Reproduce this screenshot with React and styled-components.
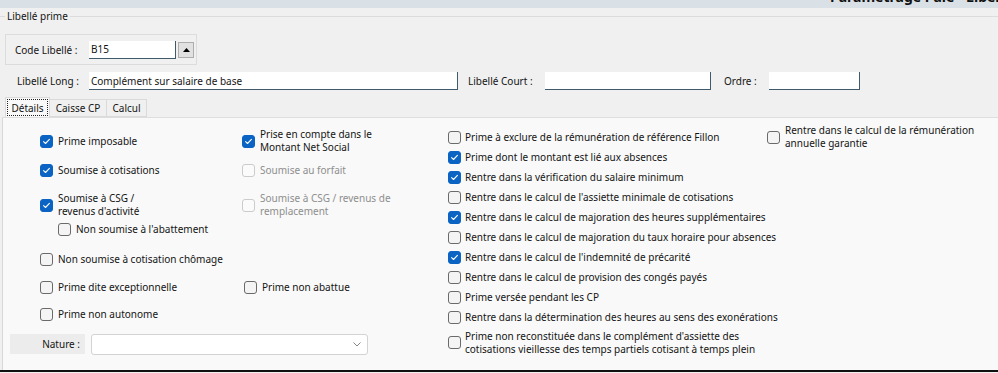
import React from "react";
import styled, { createGlobalStyle } from "styled-components";

const Global = createGlobalStyle`
  html, body { margin: 0; padding: 0; background: #f0f0f0; }
  body { font-family: "Noto Sans", "Open Sans", sans-serif; font-size: 10px; color: #141414; }
  * { box-sizing: border-box; }
`;

const Window = styled.div`
  width: 998px;
  height: 373px;
  overflow: hidden;
  display: flex;
  flex-direction: column;
  background: #f0f0f0;
`;

const TitleBar = styled.div`
  height: 8px;
  flex: none;
  background: #d9e1e7;
  overflow: hidden;
`;

const TitleText = styled.div`
  margin: -10px 0 0 830px;
  font-size: 14px;
  line-height: 14px;
  font-weight: 700;
  white-space: nowrap;
  color: #111;
`;

const Header = styled.div`
  flex: none;
  padding-top: 3px;
  background: #f0f0f0;
`;

const LegendRow = styled.div`
  display: flex;
  align-items: center;
  height: 11px;
  gap: 2px;
`;

const LegendLine = styled.div`
  height: 1px;
  background: #dcdcdc;
  width: ${(p) => (p.$w ? `${p.$w}px` : "auto")};
  flex: ${(p) => (p.$w ? "none" : "1")};
`;

const LegendText = styled.span`
  white-space: nowrap;
  line-height: 11px;
`;

const CodeBox = styled.div`
  margin: 12px 0 0 5px;
  width: 192px;
  height: 31px;
  border: 1px solid #dcdcdc;
  display: flex;
  align-items: center;
  padding-left: 9px;
`;

const Label = styled.span`
  flex: none;
  width: ${(p) => p.$w}px;
  margin-left: ${(p) => p.$ml || 0}px;
  white-space: nowrap;
`;

const TextInput = styled.div`
  flex: none;
  width: ${(p) => p.$w}px;
  height: 18px;
  background: #fff;
  border-right: 1px solid #3f5a6a;
  border-bottom: 1px solid #3f5a6a;
  padding-left: 2px;
  display: flex;
  align-items: center;
  white-space: nowrap;
`;

const SpinButton = styled.div`
  flex: none;
  margin-left: 2px;
  width: 16px;
  height: 16px;
  background: #e1e1e1;
  border: 1px solid #adadad;
  display: flex;
  align-items: center;
  justify-content: center;
`;

const FieldsRow = styled.div`
  margin-top: 7px;
  height: 18px;
  display: flex;
  align-items: center;
  padding-left: 17px;
`;

const TabStrip = styled.div`
  margin-top: 7px;
  height: 20px;
  display: flex;
  align-items: flex-end;
  padding-left: 5px;
`;

const Tab = styled.div`
  height: ${(p) => (p.$active ? 20 : 18)}px;
  width: ${(p) => p.$w}px;
  background: ${(p) => (p.$active ? "#f9f9f9" : "#f0f0f0")};
  border: 1px solid #dadada;
  border-bottom: ${(p) => (p.$active ? "none" : "1px solid #dadada")};
  margin-left: ${(p) => (p.$active ? 0 : -1)}px;
  display: flex;
  align-items: center;
  justify-content: center;
  white-space: nowrap;
  padding: 1px;
`;

const FocusRect = styled.div`
  width: 100%;
  height: 100%;
  border: 1px dotted #222;
  display: flex;
  align-items: center;
  justify-content: center;
`;

const Panel = styled.div`
  flex: none;
  height: 253px;
  margin-left: 2px;
  background: #f9f9f9;
  border-top: 1px solid #dedede;
  border-left: 1px solid #d8d8d8;
  display: flex;
`;

const BottomLine = styled.div`
  flex: none;
  height: 2px;
  background: #111;
`;

const LeftArea = styled.div`
  flex: none;
  width: 445px;
  padding: 12px 0 0 7px;
  display: flex;
  flex-direction: column;
`;

const Row = styled.div`
  display: flex;
  align-items: center;
  height: ${(p) => p.$h || 22}px;
  margin-top: ${(p) => p.$mt || 0}px;
  padding-left: ${(p) => (p.$pl !== undefined ? p.$pl : 30)}px;
`;

const Cell = styled.div`
  flex: none;
  width: ${(p) => (p.$w ? `${p.$w}px` : "auto")};
  display: flex;
  align-items: center;
`;

const Item = styled.label`
  display: flex;
  align-items: center;
  gap: ${(p) => p.$gap || 5}px;
  height: ${(p) => (p.$h ? `${p.$h}px` : "auto")};
  color: ${(p) => (p.$disabled ? "#8e8e8e" : "#141414")};
  line-height: 13px;
`;

const Box = styled.span`
  flex: none;
  width: 13px;
  height: 13px;
  border-radius: 3px;
  display: flex;
  align-items: center;
  justify-content: center;
  background: ${(p) => (p.$checked ? "#0b63c4" : p.$disabled ? "#fbfbfb" : "#f4f4f4")};
  border: 1px solid
    ${(p) => (p.$checked ? "#0b63c4" : p.$disabled ? "#cbcbcb" : "#6a6a6a")};
`;

const ItemText = styled.span`
  white-space: nowrap;
`;

const RightList = styled.div`
  flex: none;
  width: 319px;
  padding-top: 9px;
  display: flex;
  flex-direction: column;
`;

const FarRight = styled.div`
  flex: none;
  padding-top: 6px;
`;

const NatureLabel = styled.div`
  flex: none;
  width: 75px;
  height: 20px;
  background: #ececec;
  display: flex;
  align-items: center;
  justify-content: flex-end;
  padding-right: 5px;
`;

const Select = styled.div`
  flex: none;
  margin-left: 6px;
  width: 277px;
  height: 21px;
  background: #fff;
  border: 1px solid #d3d3d3;
  border-radius: 3px;
  display: flex;
  align-items: center;
  justify-content: flex-end;
  padding-right: 6px;
`;

const Check = ({ checked, disabled, children, gap, h }) => (
  <Item $disabled={disabled} $gap={gap} $h={h}>
    <Box $checked={checked} $disabled={disabled}>
      {checked && (
        <svg width="9" height="9" viewBox="0 0 9 9">
          <path d="M1.6 4.7 L3.5 6.5 L7.4 2.4" fill="none" stroke="#fff" strokeWidth="1.1" strokeLinecap="round" strokeLinejoin="round" />
        </svg>
      )}
    </Box>
    <ItemText>{children}</ItemText>
  </Item>
);

const rightItems = [
  ["Prime à exclure de la rémunération de référence Fillon", false],
  ["Prime dont le montant est lié aux absences", true],
  ["Rentre dans la vérification du salaire minimum", true],
  ["Rentre dans le calcul de l'assiette minimale de cotisations", false],
  ["Rentre dans le calcul de majoration des heures supplémentaires", true],
  ["Rentre dans le calcul de majoration du taux horaire pour absences", false],
  ["Rentre dans le calcul de l'indemnité de précarité", true],
  ["Rentre dans le calcul de provision des congés payés", false],
  ["Prime versée pendant les CP", false],
  ["Rentre dans la détermination des heures au sens des exonérations", false],
];

export default function App() {
  return (
    <Window>
      <Global />
      <TitleBar>
        <TitleText>Paramétrage Paie - Libellé prime</TitleText>
      </TitleBar>
      <Header>
        <LegendRow>
          <LegendLine $w={5} />
          <LegendText>Libellé prime</LegendText>
          <LegendLine />
        </LegendRow>
        <CodeBox>
          <Label $w={74}>Code Libellé :</Label>
          <TextInput $w={87}>B15</TextInput>
          <SpinButton>
            <svg width="7" height="4" viewBox="0 0 7 4">
              <path d="M0 4 L3.5 0 L7 4 Z" fill="#000" />
            </svg>
          </SpinButton>
        </CodeBox>
        <FieldsRow>
          <Label $w={72}>Libellé Long :</Label>
          <TextInput $w={369}>Complément sur salaire de base</TextInput>
          <Label $w={77} $ml={10}>Libellé Court :</Label>
          <TextInput $w={166} />
          <Label $w={45} $ml={13}>Ordre :</Label>
          <TextInput $w={91} />
        </FieldsRow>
        <TabStrip>
          <Tab $active $w={45}>
            <FocusRect>Détails</FocusRect>
          </Tab>
          <Tab $w={58}>Caisse CP</Tab>
          <Tab $w={41}>Calcul</Tab>
        </TabStrip>
      </Header>
      <Panel>
        <LeftArea>
          <Row>
            <Cell $w={202}>
              <Check checked>Prime imposable</Check>
            </Cell>
            <Cell>
              <Check checked>
                Prise en compte dans le
                <br />
                Montant Net Social
              </Check>
            </Cell>
          </Row>
          <Row $mt={7}>
            <Cell $w={202}>
              <Check checked>Soumise à cotisations</Check>
            </Cell>
            <Cell>
              <Check disabled>Soumise au forfait</Check>
            </Cell>
          </Row>
          <Row $mt={13}>
            <Cell $w={202}>
              <Check checked>
                Soumise à CSG /
                <br />
                revenus d'activité
              </Check>
            </Cell>
            <Cell>
              <Check disabled>
                Soumise à CSG / revenus de
                <br />
                remplacement
              </Check>
            </Cell>
          </Row>
          <Row $mt={4} $h={18} $pl={48}>
            <Check>Non soumise à l'abattement</Check>
          </Row>
          <Row $mt={10}>
            <Check>Non soumise à cotisation chômage</Check>
          </Row>
          <Row $mt={6}>
            <Cell $w={204}>
              <Check>Prime dite exceptionnelle</Check>
            </Cell>
            <Cell>
              <Check>Prime non abattue</Check>
            </Cell>
          </Row>
          <Row $mt={5}>
            <Check>Prime non autonome</Check>
          </Row>
          <Row $mt={8} $pl={0}>
            <NatureLabel>Nature :</NatureLabel>
            <Select>
              <svg width="8" height="5" viewBox="0 0 8 5">
                <path d="M0.5 0.5 L4 4 L7.5 0.5" fill="none" stroke="#777" strokeWidth="0.9" />
              </svg>
            </Select>
          </Row>
        </LeftArea>
        <RightList>
          {rightItems.map(([t, c]) => (
            <Check key={t} checked={c} gap={4} h={20}>
              {t}
            </Check>
          ))}
          <Check gap={4} h={31}>
            Prime non reconstituée dans le complément d'assiette des
            <br />
            cotisations vieillesse des temps partiels cotisant à temps plein
          </Check>
        </RightList>
        <FarRight>
          <Check h={26}>
            Rentre dans le calcul de la rémunération
            <br />
            annuelle garantie
          </Check>
        </FarRight>
      </Panel>
      <BottomLine />
    </Window>
  );
}
